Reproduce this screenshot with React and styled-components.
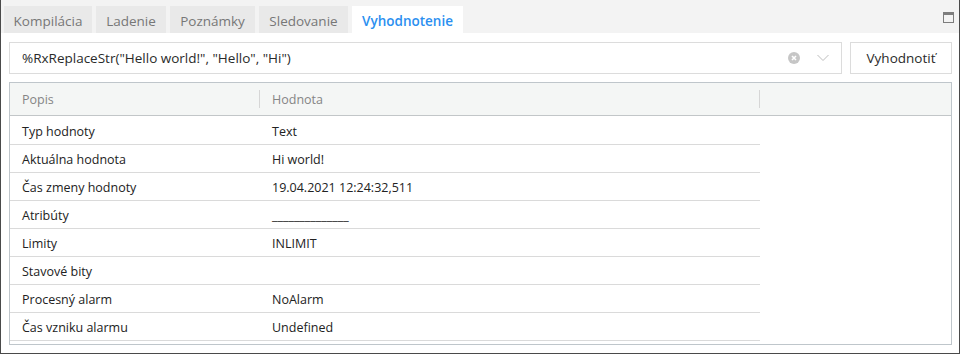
import React from "react";
import styled, { createGlobalStyle } from "styled-components";

const Global = createGlobalStyle`
  html, body { margin: 0; padding: 0; background: #fff; }
  body { font-family: "Open Sans", "Noto Sans", sans-serif; }
  * { box-sizing: border-box; }
`;

const Window = styled.div`
  width: 960px;
  height: 354px;
  border: 1px solid #4a4a4a;
  border-top: none;
  display: flex;
  flex-direction: column;
  background: #fff;
  overflow: hidden;
`;

const TabBar = styled.div`
  height: 33px;
  flex: none;
  background: #f3f3f3;
  display: flex;
  align-items: flex-end;
  gap: 4px;
  padding-left: 3px;
  padding-right: 5px;
`;

const Tab = styled.div`
  height: 27px;
  padding-top: 3px;
  display: flex;
  align-items: center;
  justify-content: center;
  background: ${(p) => (p.$active ? "#fff" : "#e9e9e9")};
  color: ${(p) => (p.$active ? "#2b8ff0" : "#777")};
  font-size: 13.5px;
  font-weight: ${(p) => (p.$active ? 600 : 400)};
  width: ${(p) => p.$w}px;
`;

const Spacer = styled.div`
  flex: 1;
`;

const MaxIcon = styled.div`
  width: 11px;
  height: 11px;
  border: 1px solid #7d7d7d;
  border-top-width: 3px;
  margin-bottom: 10px;
`;

const Content = styled.div`
  flex: 1;
  padding: 9px 7px 8px 8px;
  display: flex;
  flex-direction: column;
  gap: 8px;
`;

const InputRow = styled.div`
  display: flex;
  gap: 8px;
  height: 32px;
`;

const Combo = styled.div`
  flex: 1;
  border: 1px solid #dcdcdc;
  display: flex;
  align-items: center;
  padding-left: 12px;
  padding-right: 12px;
  font-size: 13.5px;
  color: #2a2a2a;
`;

const ComboText = styled.span`
  flex: 1;
  white-space: nowrap;
`;

const IconBox = styled.span`
  display: flex;
  align-items: center;
  margin-left: ${(p) => p.$ml}px;
`;

const Button = styled.div`
  width: 102px;
  border: 1px solid #dcdcdc;
  display: flex;
  align-items: center;
  justify-content: center;
  font-size: 13.5px;
  color: #2a2a2a;
`;

const Table = styled.div`
  flex: 1;
  border: 1px solid #bfc6cb;
  display: flex;
  flex-direction: column;
`;

const HeaderRow = styled.div`
  height: 33px;
  flex: none;
  background: #f4f6f5;
  border-bottom: 1px solid #c2c6c8;
  display: flex;
  align-items: center;
`;

const HeadCell = styled.div`
  width: ${(p) => p.$w}px;
  height: 100%;
  display: flex;
  align-items: center;
  padding-left: 12px;
  padding-top: 1px;
  font-size: 12.5px;
  color: #858585;
  position: relative;
  &::after {
    content: "";
    position: absolute;
    right: 0;
    top: 7px;
    bottom: 7px;
    width: 1px;
    background: ${(p) => (p.$sep ? "#d6d6d6" : "transparent")};
  }
`;

const Body = styled.div`
  padding-top: 1px;
`;

const Row = styled.div`
  width: 750px;
  height: 28px;
  display: flex;
  align-items: center;
  padding-top: 1px;
  border-bottom: 1px solid #dadada;
  font-size: 12.5px;
  color: #222;
`;

const Cell = styled.div`
  width: ${(p) => p.$w}px;
  padding-left: 12px;
  white-space: nowrap;
`;

const rows = [
  ["Typ hodnoty", "Text"],
  ["Aktuálna hodnota", "Hi world!"],
  ["Čas zmeny hodnoty", "19.04.2021 12:24:32,511"],
  ["Atribúty", "______________"],
  ["Limity", "INLIMIT"],
  ["Stavové bity", ""],
  ["Procesný alarm", "NoAlarm"],
  ["Čas vzniku alarmu", "Undefined"],
];

const tabs = [
  { label: "Kompilácia", w: 88 },
  { label: "Ladenie", w: 70 },
  { label: "Poznámky", w: 85 },
  { label: "Sledovanie", w: 89 },
  { label: "Vyhodnotenie", w: 111, active: true },
];

export default function App() {
  return (
    <>
      <Global />
      <Window>
        <TabBar>
          {tabs.map((t) => (
            <Tab key={t.label} $w={t.w} $active={t.active}>
              {t.label}
            </Tab>
          ))}
          <Spacer />
          <MaxIcon />
        </TabBar>
        <Content>
          <InputRow>
            <Combo>
              <ComboText>%RxReplaceStr("Hello world!", "Hello", "Hi")</ComboText>
              <IconBox $ml={0}>
                <svg width="12" height="12" viewBox="0 0 12 12">
                  <circle cx="6" cy="6" r="6" fill="#c6c6c6" />
                  <path d="M4 4 L8 8 M8 4 L4 8" stroke="#fff" strokeWidth="1.6" />
                </svg>
              </IconBox>
              <IconBox $ml={17}>
                <svg width="12" height="8" viewBox="0 0 12 8">
                  <path d="M0.5 1 L6 6.5 L11.5 1" stroke="#bdbdbd" strokeWidth="1" fill="none" />
                </svg>
              </IconBox>
            </Combo>
            <Button>Vyhodnotiť</Button>
          </InputRow>
          <Table>
            <HeaderRow>
              <HeadCell $w={250} $sep>Popis</HeadCell>
              <HeadCell $w={500} $sep>Hodnota</HeadCell>
            </HeaderRow>
            <Body>
              {rows.map(([a, b]) => (
                <Row key={a}>
                  <Cell $w={250}>{a}</Cell>
                  <Cell $w={500}>{b}</Cell>
                </Row>
              ))}
            </Body>
          </Table>
        </Content>
      </Window>
    </>
  );
}
